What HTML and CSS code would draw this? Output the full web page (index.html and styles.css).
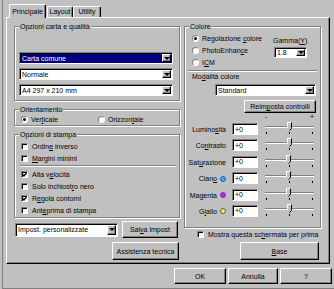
FILE: index.html
```html
<!doctype html>
<html lang="it">
    <head>
        <meta charset="UTF-8" />
        <title>Proprietà stampante - Principale</title>
        <link rel="stylesheet" href="styles.css">
    </head>
    <body>
        <div class="window">
            <div class="tabs">
                <div class="tab tab-active">Principale</div>
                <div class="tab tab-layout">Layout</div>
                <div class="tab tab-utility">Utility</div>
            </div>

            <div class="panel">
                <!-- left column: paper, orientation, print options -->
                <div class="col-left">
                    <div class="group group-paper">
                        <span class="legend">Opzioni carta e qualità</span>
                        <div class="select select-selected"><span>Carta comune</span><span class="drop"></span></div>
                        <div class="select"><span>Normale</span><span class="drop"></span></div>
                        <div class="select"><span>A4 297 x 210 mm</span><span class="drop"></span></div>
                    </div>

                    <div class="group group-orient">
                        <span class="legend">Orientamento</span>
                        <div class="radio-item radio-vert"><span class="radio radio-on"></span><span>Ver<u>t</u>icale</span></div>
                        <div class="radio-item"><span class="radio"></span><span>Orizzon<u>t</u>ale</span></div>
                    </div>

                    <div class="group group-print">
                        <span class="legend">Opzioni di stampa</span>
                        <div class="check-item"><span class="check"></span><span>Ordin<u>e</u> inverso</span></div>
                        <div class="check-item"><span class="check"></span><span><u>M</u>argini minimi</span></div>
                        <div class="separator"></div>
                        <div class="check-item">
                            <span class="check"><svg width="5" height="5" viewBox="0 0 5 5"><path d="M0.4 2.2L2 3.9L4.6 0.7" fill="none" stroke="#000" stroke-width="1.3"/></svg></span><span>Alta v<u>e</u>locità</span>
                        </div>
                        <div class="check-item"><span class="check"></span><span>Solo inchiost<u>r</u>o nero</span></div>
                        <div class="check-item">
                            <span class="check"><svg width="5" height="5" viewBox="0 0 5 5"><path d="M0.4 2.2L2 3.9L4.6 0.7" fill="none" stroke="#000" stroke-width="1.3"/></svg></span><span>R<u>e</u>gola contorni</span>
                        </div>
                        <div class="check-item"><span class="check"></span><span>Ant<u>e</u>prima di stampa</span></div>
                    </div>

                    <div class="save-row">
                        <div class="select select-custom"><span>Impost. personalizzate</span><span class="drop"></span></div>
                        <button class="button btn-save"><span>Sal<u>v</u>a impost</span></button>
                    </div>
                    <div class="help-row">
                        <button class="button btn-help">Assistenza tecnica</button>
                    </div>
                </div>

                <!-- right column: colour settings -->
                <div class="col-right">
                    <div class="group group-color">
                        <span class="legend">Colore</span>
                        <div class="color-top">
                            <div class="color-modes">
                                <div class="radio-item"><span class="radio radio-on"></span><span>Regolazione <u>c</u>olore</span></div>
                                <div class="radio-item"><span class="radio"></span><span>PhotoEnhan<u>c</u>e</span></div>
                                <div class="radio-item"><span class="radio"></span><span>I<u>C</u>M</span></div>
                            </div>
                            <div class="gamma">
                                <div class="gamma-label">Gamma(<u>Y</u>)</div>
                                <div class="select select-gamma"><span>1.8</span><span class="drop"></span></div>
                            </div>
                        </div>
                        <div class="separator separator-color"></div>
                        <div class="mode-label">Mo<u>d</u>alità colore</div>
                        <div class="select select-mode"><span>Standard</span><span class="drop"></span></div>
                        <button class="button btn-reset"><span>Reim<u>p</u>osta controlli</span></button>
                        <div class="scale"><span>-</span><span>+</span></div>

                        <div class="adjust-row">
                            <div class="adjust-label"><span>Lumino<u>s</u>ità</span></div>
                            <div class="field">+0</div>
                            <svg class="slider" width="49" height="14" viewBox="0 0 49 14"><path d="M0 4.5H49" stroke="#808080"/><path d="M0 5.5H49" stroke="#fff"/><path d="M1.5 10v2M24.5 10v2M47.5 10v2" stroke="#000"/><path d="M22 0h5v6l-2.5 2.5L22 6z" fill="#c0c0c0"/><path d="M22.5 6.5V0.5H26.5" stroke="#fff" fill="none"/><path d="M26.5 0.5V6.5L24.5 8.5" stroke="#000" fill="none"/></svg>
                        </div>
                        <div class="adjust-row">
                            <div class="adjust-label"><span>Co<u>n</u>trasto</span></div>
                            <div class="field">+0</div>
                            <svg class="slider" width="49" height="14" viewBox="0 0 49 14"><path d="M0 4.5H49" stroke="#808080"/><path d="M0 5.5H49" stroke="#fff"/><path d="M1.5 10v2M24.5 10v2M47.5 10v2" stroke="#000"/><path d="M22 0h5v6l-2.5 2.5L22 6z" fill="#c0c0c0"/><path d="M22.5 6.5V0.5H26.5" stroke="#fff" fill="none"/><path d="M26.5 0.5V6.5L24.5 8.5" stroke="#000" fill="none"/></svg>
                        </div>
                        <div class="adjust-row">
                            <div class="adjust-label"><span>Sat<u>u</u>razione</span></div>
                            <div class="field">+0</div>
                            <svg class="slider" width="49" height="14" viewBox="0 0 49 14"><path d="M0 4.5H49" stroke="#808080"/><path d="M0 5.5H49" stroke="#fff"/><path d="M1.5 10v2M24.5 10v2M47.5 10v2" stroke="#000"/><path d="M21 0h5v6l-2.5 2.5L21 6z" fill="#c0c0c0"/><path d="M21.5 6.5V0.5H25.5" stroke="#fff" fill="none"/><path d="M25.5 0.5V6.5L23.5 8.5" stroke="#000" fill="none"/></svg>
                        </div>
                        <div class="adjust-row">
                            <div class="adjust-label"><span>Cian<u>o</u></span><span class="dot dot-cyan"></span></div>
                            <div class="field">+0</div>
                            <svg class="slider" width="49" height="14" viewBox="0 0 49 14"><path d="M0 4.5H49" stroke="#808080"/><path d="M0 5.5H49" stroke="#fff"/><path d="M1.5 10v2M24.5 10v2M47.5 10v2" stroke="#000"/><path d="M21 0h5v6l-2.5 2.5L21 6z" fill="#c0c0c0"/><path d="M21.5 6.5V0.5H25.5" stroke="#fff" fill="none"/><path d="M25.5 0.5V6.5L23.5 8.5" stroke="#000" fill="none"/></svg>
                        </div>
                        <div class="adjust-row">
                            <div class="adjust-label"><span>Magenta</span><span class="dot dot-magenta"></span></div>
                            <div class="field">+0</div>
                            <svg class="slider" width="49" height="14" viewBox="0 0 49 14"><path d="M0 4.5H49" stroke="#808080"/><path d="M0 5.5H49" stroke="#fff"/><path d="M1.5 10v2M24.5 10v2M47.5 10v2" stroke="#000"/><path d="M21 0h5v6l-2.5 2.5L21 6z" fill="#c0c0c0"/><path d="M21.5 6.5V0.5H25.5" stroke="#fff" fill="none"/><path d="M25.5 0.5V6.5L23.5 8.5" stroke="#000" fill="none"/></svg>
                        </div>
                        <div class="adjust-row">
                            <div class="adjust-label"><span>G<u>i</u>allo</span><span class="dot dot-yellow"></span></div>
                            <div class="field">+0</div>
                            <svg class="slider" width="49" height="14" viewBox="0 0 49 14"><path d="M0 4.5H49" stroke="#808080"/><path d="M0 5.5H49" stroke="#fff"/><path d="M1.5 10v2M24.5 10v2M47.5 10v2" stroke="#000"/><path d="M22 0h5v6l-2.5 2.5L22 6z" fill="#c0c0c0"/><path d="M22.5 6.5V0.5H26.5" stroke="#fff" fill="none"/><path d="M26.5 0.5V6.5L24.5 8.5" stroke="#000" fill="none"/></svg>
                        </div>
                    </div>

                    <div class="check-item show-first"><span class="check"></span><span>Mostra questa sc<u>h</u>ermata per prima</span></div>
                    <button class="button btn-base"><span><u>B</u>ase</span></button>
                </div>
            </div>

            <div class="footer">
                <button class="button btn-ok">OK</button>
                <button class="button btn-cancel">Annulla</button>
                <button class="button btn-ok">?</button>
            </div>
        </div>
    </body>
</html>
```

FILE: styles.css
```css
body {
    margin: 0;
    background-color: #c0c0c0;
    font-family: "Liberation Sans", Arial, sans-serif;
    font-size: 7px;
    line-height: 9px;
    color: #000000;
}
.window {
    box-sizing: border-box;
    width: 332px;
    height: 289px;
    margin-left: 2px;
    border-left: 1px solid #808080;
    border-bottom: 1px solid #808080;
}

/* tabs */
.tabs {
    display: flex;
    align-items: flex-end;
    height: 17px;
    padding-left: 6px;
}
.tab {
    box-sizing: border-box;
    height: 11px;
    text-align: center;
    border: 1px solid #ffffff;
    border-bottom: none;
    border-right-color: #000000;
    border-radius: 2px 2px 0 0;
    box-shadow: inset -1px 0 #808080;
}
.tab-active {
    position: relative;
    z-index: 1;
    width: 37px;
    height: 14px;
    margin-bottom: -1px;
    padding-top: 2px;
    background-color: #c0c0c0;
}
.tab-layout {
    width: 26px;
    margin-left: 1px;
}
.tab-utility {
    width: 28px;
}

.panel {
    box-sizing: border-box;
    display: flex;
    width: 324px;
    height: 247px;
    margin-left: 3px;
    padding: 8px 0 0 7px;
    border: 1px solid;
    border-color: #ffffff #000000 #000000 #ffffff;
    box-shadow: inset -1px -1px #808080;
}
.col-left {
    width: 166px;
}
.col-right {
    width: 137px;
    margin-left: 4px;
}

/* etched group boxes */
.group {
    position: relative;
    box-sizing: border-box;
    border: 1px solid #808080;
    box-shadow: inset 1px 1px #ffffff, 1px 1px #ffffff;
}
.legend {
    position: absolute;
    top: -5px;
    left: 4px;
    padding: 0 1px;
    background-color: #c0c0c0;
    white-space: nowrap;
}
.group-paper {
    display: flex;
    flex-direction: column;
    gap: 4px;
    height: 75px;
    padding: 25px 0 0 4px;
}
.group-paper .select {
    width: 154px;
}
.group-orient {
    display: flex;
    height: 17px;
    margin-top: 8px;
    padding: 4px 0 0 6px;
}
.radio-vert {
    width: 77px;
}
.group-print {
    height: 84px;
    margin-top: 8px;
    padding: 5px 0 0 6px;
}
.separator {
    box-sizing: border-box;
    width: 156px;
    height: 2px;
    margin: 1px 0 1px -1px;
    border-top: 1px solid #808080;
    border-bottom: 1px solid #ffffff;
}

/* radios and checkboxes */
.radio-item,
.check-item {
    display: flex;
    align-items: center;
    white-space: nowrap;
}
.radio-item {
    height: 11px;
}
.check-item {
    height: 12px;
}
.radio {
    box-sizing: border-box;
    display: flex;
    align-items: center;
    justify-content: center;
    width: 7px;
    height: 7px;
    margin-right: 3px;
    border: 1px solid;
    border-color: #808080 #ffffff #ffffff #808080;
    border-radius: 50%;
    background-color: #ffffff;
}
.radio-on::after {
    content: "";
    width: 3px;
    height: 3px;
    border-radius: 50%;
    background-color: #000000;
}
.check {
    box-sizing: border-box;
    display: flex;
    align-items: center;
    justify-content: center;
    width: 7px;
    height: 7px;
    margin-right: 4px;
    border: 1px solid;
    border-color: #808080 #ffffff #ffffff #808080;
    background-color: #ffffff;
    box-shadow: inset 1px 1px #000000;
}
.check svg {
    display: block;
}

/* combo boxes and fields */
.select,
.field {
    box-sizing: border-box;
    display: flex;
    align-items: center;
    height: 12px;
    padding: 1px 1px 1px 2px;
    border: 1px solid;
    border-color: #808080 #ffffff #ffffff #808080;
    background-color: #ffffff;
    box-shadow: inset 1px 1px #000000;
    white-space: nowrap;
}
.select-selected {
    background-color: #000080;
    color: #ffffff;
}
.drop {
    box-sizing: border-box;
    display: flex;
    align-items: center;
    justify-content: center;
    align-self: stretch;
    width: 9px;
    margin-left: auto;
    border: 1px solid;
    border-color: #ffffff #000000 #000000 #ffffff;
    background-color: #c0c0c0;
    box-shadow: inset -1px -1px #808080;
}
.drop::after {
    content: "";
    border-top: 3px solid #000000;
    border-left: 3px solid transparent;
    border-right: 3px solid transparent;
}

/* push buttons */
.button {
    box-sizing: border-box;
    display: flex;
    align-items: center;
    justify-content: center;
    padding: 0;
    font: inherit;
    color: #000000;
    background-color: #c0c0c0;
    border: 1px solid;
    border-color: #ffffff #000000 #000000 #ffffff;
    box-shadow: inset -1px -1px #808080;
    white-space: nowrap;
}

.save-row {
    display: flex;
    align-items: center;
    height: 17px;
    margin-top: 3px;
}
.select-custom {
    width: 103px;
    height: 14px;
    margin-left: 1px;
}
.btn-save {
    width: 56px;
    height: 17px;
    margin-left: 4px;
}
.help-row {
    display: flex;
    justify-content: flex-end;
    margin-top: 4px;
}
.btn-help {
    width: 67px;
    height: 18px;
    margin-right: 1px;
}

/* colour group */
.group-color {
    height: 202px;
    padding: 5px 0 0 7px;
}
.color-top {
    display: flex;
}
.color-modes {
    width: 81px;
}
.color-modes .radio-item {
    height: 12px;
}
.gamma-label {
    margin-top: 4px;
}
.select-gamma {
    width: 33px;
    height: 11px;
    margin: 2px 0 0 1px;
}
.separator-color {
    width: 129px;
    margin: 2px 0 0 -4px;
}
.select-mode {
    width: 101px;
    margin: 3px 0 0 23px;
}
.btn-reset {
    width: 72px;
    height: 13px;
    margin: 4px 0 0 52px;
}
.scale {
    display: flex;
    justify-content: space-between;
    width: 49px;
    height: 8px;
    margin-left: 73px;
    line-height: 8px;
}
.adjust-row {
    display: flex;
    align-items: flex-start;
    height: 16.4px;
}
.adjust-label {
    display: flex;
    align-items: center;
    justify-content: flex-end;
    width: 42px;
    margin: 4px 0 0 -7px;
    padding-right: 1px;
    box-sizing: border-box;
    white-space: nowrap;
}
.field {
    width: 26px;
    margin: 2px 0 0 5px;
}
.slider {
    display: block;
    margin: 1px 0 0 7px;
}
.dot {
    box-sizing: border-box;
    width: 6px;
    height: 6px;
    margin-left: 3px;
    border: 1px solid #5050a0;
    border-radius: 50%;
}
.dot-cyan {
    background-color: #00c8ff;
}
.dot-magenta {
    background-color: #ff00ff;
}
.dot-yellow {
    background-color: #ffff00;
}

.show-first {
    height: 11px;
    margin: 1px 0 0 13px;
}
.btn-base {
    width: 79px;
    height: 18px;
    margin: 2px 0 0 56px;
}

.footer {
    display: flex;
    justify-content: flex-end;
    gap: 2px;
    margin-top: 4px;
    padding-right: 2px;
}
.btn-ok {
    width: 52px;
    height: 16px;
}
.btn-cancel {
    width: 50px;
    height: 16px;
}
```
